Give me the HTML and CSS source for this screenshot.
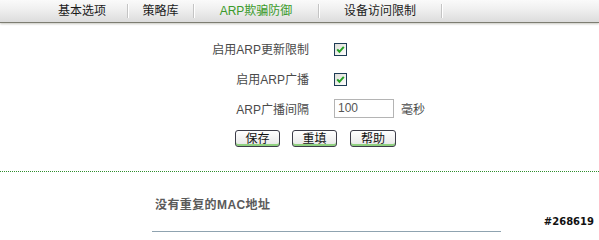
FILE: index.html
```html
<!DOCTYPE html>
<html lang="zh">
<head>
<meta charset="utf-8">
<title>ARP欺骗防御</title>
<link rel="stylesheet" href="styles.css">
</head>
<body>
<nav class="tabs">
  <a class="tab tab-1">基本选项</a><span class="sep"></span>
  <a class="tab tab-2">策略库</a><span class="sep"></span>
  <a class="tab tab-3 active">ARP欺骗防御</a><span class="sep"></span>
  <a class="tab tab-4">设备访问限制</a><span class="sep"></span>
</nav>

<form class="form">
  <div class="grid">
    <label class="lbl">启用ARP更新限制</label>
    <div class="ctl">
      <svg class="chk" width="13" height="13" viewBox="0 0 13 13"><defs><linearGradient id="g1" x1="0" y1="0" x2="1" y2="1"><stop offset="0" stop-color="#dcdcd6"/><stop offset="1" stop-color="#ffffff"/></linearGradient></defs><rect x="0.5" y="0.5" width="12" height="12" fill="url(#g1)" stroke="#1d3b55"/><path d="M3.2 6.4 L5.4 8.8 L9.8 3.9" fill="none" stroke="#22a022" stroke-width="2"/></svg>
    </div>
    <label class="lbl">启用ARP广播</label>
    <div class="ctl">
      <svg class="chk" width="13" height="13" viewBox="0 0 13 13"><defs><linearGradient id="g2" x1="0" y1="0" x2="1" y2="1"><stop offset="0" stop-color="#dcdcd6"/><stop offset="1" stop-color="#ffffff"/></linearGradient></defs><rect x="0.5" y="0.5" width="12" height="12" fill="url(#g2)" stroke="#1d3b55"/><path d="M3.2 6.4 L5.4 8.8 L9.8 3.9" fill="none" stroke="#22a022" stroke-width="2"/></svg>
    </div>
    <label class="lbl">ARP广播间隔</label>
    <div class="ctl">
      <span class="input">100</span><span class="unit">毫秒</span>
    </div>
  </div>
  <div class="buttons">
    <button type="button" class="btn">保存</button>
    <button type="button" class="btn">重填</button>
    <button type="button" class="btn">帮助</button>
  </div>
</form>

<div class="divider"></div>

<section class="result">
  <h3 class="title">没有重复的MAC地址</h3>
  <div class="rule"></div>
</section>

<div class="mark">#268619</div>
</body>
</html>
```

FILE: styles.css
```css
html, body {
  margin: 0;
  padding: 0;
  background: #ffffff;
  width: 599px;
  height: 232px;
  overflow: hidden;
  position: relative;
  font-family: "Liberation Sans", "Noto Sans CJK SC", sans-serif;
  font-size: 12px;
}

.tabs {
  display: flex;
  align-items: center;
  height: 22px;
  background: linear-gradient(#fafafa, #f0f0f0 40%, #dcdcdc);
  border-bottom: 1px solid #7d7d72;
  box-shadow: 0 1px 2px #c8c8c0;
}

.tab {
  display: block;
  text-align: center;
  color: #1a1a1a;
  font-size: 12px;
  line-height: 22px;
}
.tab-1 { margin-left: 37px; width: 90px; }
.tab-2 { width: 65px; }
.tab-3 { width: 124px; }
.tab-4 { width: 122px; }
.tab.active { color: #3a9a2a; }

.sep {
  width: 1px;
  height: 14px;
  background: #c4c4c4;
  box-shadow: 1px 0 0 #ffffff;
}

.form {
  margin: 0;
  padding-top: 10px;
}

.grid {
  display: grid;
  grid-template-columns: 309px auto;
  grid-template-rows: 30px 30px 30px;
  column-gap: 25px;
}

.lbl {
  text-align: right;
  color: #4a4a4a;
  display: flex;
  align-items: center;
  justify-content: flex-end;
}

.ctl {
  display: flex;
  align-items: center;
}

.chk { display: block; margin-top: 3px; }

.input {
  box-sizing: border-box;
  width: 60px;
  height: 19px;
  border: 1px solid #b4b4b4;
  color: #555555;
  padding-left: 3px;
  line-height: 17px;
  font-size: 12px;
}
.unit {
  margin-left: 7px;
  color: #4a4a4a;
}

.buttons {
  display: flex;
  gap: 12px;
  margin-top: 7px;
  padding-left: 235px;
}

.btn {
  box-sizing: border-box;
  width: 45px;
  height: 17px;
  padding: 0;
  border: 1px solid #3c3c48;
  border-radius: 3px;
  background: linear-gradient(#ffffff, #eeeeee 70%, #e2e2e2);
  box-shadow: inset 0 -2px 0 #8fd07f;
  font-family: "Liberation Sans", "Noto Sans CJK SC", sans-serif;
  font-size: 12px;
  line-height: 14px;
  color: #111111;
}
.btn:nth-child(3) { width: 46px; margin-left: 1px; }

.divider {
  margin-top: 24px;
  border-top: 1px dotted #2f8f2f;
}

.result {
  padding-left: 152px;
}

.title {
  margin: 26px 0 0 3px;
  font-size: 12px;
  line-height: 14px;
  font-weight: bold;
  color: #5a5a5a;
  letter-spacing: 0.4px;
}

.rule {
  margin-top: 19px;
  width: 349px;
  height: 2px;
  background: #8fa3b0;
}

.mark {
  position: absolute;
  right: 5px;
  top: 216px;
  font-family: "DejaVu Sans", sans-serif;
  font-size: 10px;
  font-weight: bold;
  color: #111111;
  text-shadow: 1px 0 0 #fff, -1px 0 0 #fff, 0 1px 0 #fff, 0 -1px 0 #fff;
}
```
